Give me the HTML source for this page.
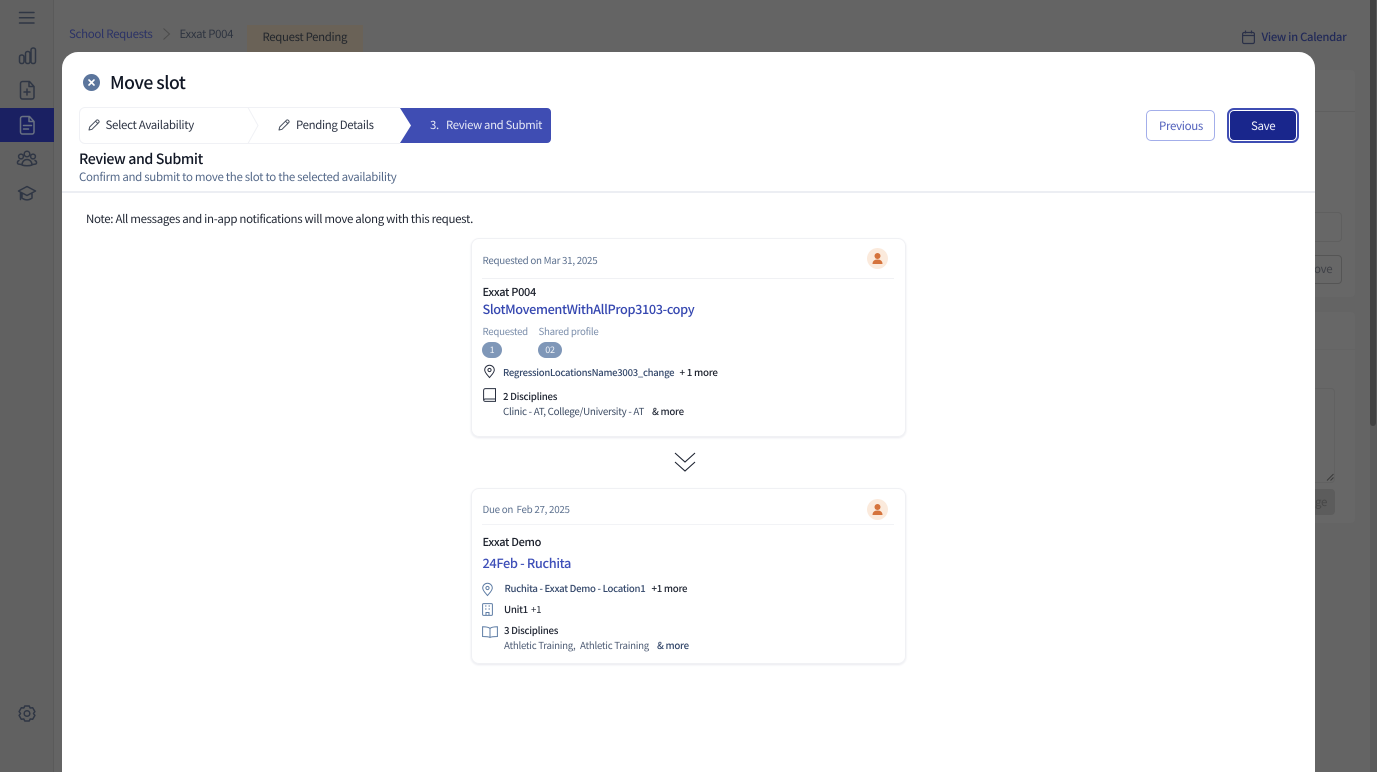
<!DOCTYPE html>
<html lang="en"><head><meta charset="utf-8"><title>Move slot</title>
<style>
html,body{margin:0;padding:0;width:1377px;height:772px;overflow:hidden}
#w{position:absolute;left:0;top:0;width:1377px;height:772px;overflow:hidden;background:#646464;font-family:"Noto Sans CJK JP","Liberation Sans",sans-serif;color:#1c2230;text-rendering:geometricPrecision}
.t{position:absolute;white-space:nowrap;line-height:20px;font-size:10.6px;letter-spacing:-.028em}
.a{position:absolute}
svg{position:absolute;overflow:visible;fill:none}
.side{stroke:#2f3644;stroke-width:1.5;stroke-linecap:round;stroke-linejoin:round}
</style></head><body><div id="w">

<!-- background page -->
<div class="a" style="left:0;top:0;width:53px;height:772px;background:#616161;border-right:1px solid #5a5a5a"></div>
<div class="a" style="left:0;top:108px;width:54px;height:34px;background:#1a2062"></div>
<svg style="left:0;top:0" width="54" height="772" class="side">
<path d="M19.500 12.500H34M19.500 17.700H34M19.500 23H34"/>
<rect x="19.500" y="55" width="4.500" height="8.500" rx="2"/><rect x="25.500" y="51.500" width="4.500" height="12" rx="2"/><rect x="31" y="48" width="4.500" height="15.500" rx="2"/>
<path d="M22.500 81.500h7l4.500 5v10.500a2 2 0 0 1-2 2H22.500a2 2 0 0 1-2-2V83.500a2 2 0 0 1 2-2zM29 81.500v5h5M24 92h6M27 89v6"/>
<path d="M22.500 116.500h7l4.500 5v10.500a2 2 0 0 1-2 2H22.500a2 2 0 0 1-2-2V118.500a2 2 0 0 1 2-2zM29 116.500v5h5M23.500 125.500h8M23.500 129h5" stroke="#687082"/>
<circle cx="27" cy="154" r="2.800"/><circle cx="21" cy="156.500" r="2.400"/><circle cx="33" cy="156.500" r="2.400"/><path d="M22 165c0-3 2-5.500 5-5.500s5 2.500 5 5.500c-2.500 1-7.500 1-10 0zM19 160.500c-2 .8-1.800 3-.8 3.500l3 .5M35 160.500c2 .8 1.800 3 .8 3.500l-3 .5"/>
<path d="M18.500 191l8.500-4.500 8.500 4.500-8.500 4.500zM22 193.500v4.500c3 2.500 7 2.500 10 0v-4.500M20.500 192v7.500"/>
<circle cx="27" cy="713.500" r="2.800"/><path d="M24.800 706l4.400 0 1 2 2.500-.2 2.200 3.800-1.400 1.900 1.400 1.900-2.200 3.800-2.500-.2-1 2h-4.400l-1-2-2.500.2-2.200-3.800 1.400-1.900-1.400-1.900 2.200-3.800 2.500.2z"/>
</svg>

<div class="t" style="left:69px;top:24px;font-size:11.5px;color:#2b3266">School Requests</div>
<svg style="left:162px;top:28px" width="9" height="12" stroke="#4b4b4b" stroke-width="1"><path d="M1.500 .5l6 5.500-6 5.500"/></svg>
<div class="t" style="left:179.500px;top:24px;font-size:11.4px;color:#2e3440">Exxat P004</div>
<div class="a" style="left:247px;top:25px;width:116px;height:27px;background:#6a6257"></div>
<div class="t" style="left:262.500px;top:27px;font-size:11.4px;color:#22262c">Request Pending</div>
<svg style="left:1242px;top:30px" width="13" height="14" stroke="#2a3048" stroke-width="1.200"><rect x=".6" y="2.500" width="11.800" height="11" rx="1.500"/><path d="M.6 5.500h11.800M3.500 .5v3M9.500 .5v3"/></svg>
<div class="t" style="left:1261.500px;top:27px;font-size:11.3px;font-weight:500;color:#222a58">View in Calendar</div>

<div class="a" style="left:1370px;top:0;width:7px;height:772px;background:#5c5c5c"></div>
<div class="a" style="left:1370px;top:0;width:6px;height:426px;background:#434343;border-radius:0 0 3px 3px"></div>

<div class="a" style="left:1315px;top:70px;width:40px;height:227px;background:#676767;border-radius:0 4px 4px 0"></div>
<div class="a" style="left:1315px;top:111px;width:40px;height:1px;background:#5f5f5f"></div>
<div class="a" style="left:1315px;top:212px;width:26px;height:28px;border:1px solid #5f5f5f;border-left:0;border-radius:0 4px 4px 0"></div>
<div class="a" style="left:1315px;top:255px;width:26px;height:27px;border:1px solid #555;border-left:0;border-radius:0 4px 4px 0"></div>
<div class="t" style="left:1314px;top:259px;font-size:11.5px;color:#3f4147">ove</div>
<div class="a" style="left:1315px;top:312px;width:40px;height:37px;background:#676767;border-radius:0 4px 0 0"></div>
<div class="a" style="left:1315px;top:350px;width:40px;height:173px;background:#676767;border-radius:0 0 4px 0"></div>
<div class="a" style="left:1315px;top:388px;width:19px;height:93px;border:1px solid #616161;border-left:0;border-radius:0 4px 4px 0"></div>
<svg style="left:1326px;top:473px" width="9" height="9" stroke="#3a3a3a" stroke-width="1"><path d="M1 7.500L7.500 1M4.500 7.500L7.500 4.500"/></svg>
<div class="a" style="left:1315px;top:489px;width:20px;height:26px;background:#5c5c5c;border-radius:0 4px 4px 0"></div>
<div class="t" style="left:1315px;top:492px;font-size:11.5px;color:#474747">ge</div>

<!-- modal -->
<div class="a" style="left:62px;top:52px;width:1253px;height:740px;background:#fff;border-radius:16px"></div>

<svg style="left:83px;top:74px" width="17" height="17"><circle cx="8.500" cy="8.500" r="8.500" fill="#5b759c"/><path d="M6 6l5 5M11 6l-5 5" stroke="#fff" stroke-width="1.600" stroke-linecap="round"/></svg>
<div class="t" style="left:110px;top:71px;font-size:17.6px;line-height:24px;font-weight:500;color:#111725">Move slot</div>

<!-- stepper -->
<svg style="left:79px;top:107px" width="473" height="37">
<path d="M6 .500H169M169 .500l10 18-10 18H6a5.500 5.500 0 0 1-5.500-5.500V6A5.500 5.500 0 0 1 6 .500zM169 36.500H321" stroke="#f0f1f5" fill="#fff"/>
<path d="M169 .500H321" stroke="#f0f1f5"/>
<path d="M321 1h147a4 4 0 0 1 4 4v27a4 4 0 0 1-4 4H321l11-17.500z" fill="#3f4db3"/>
</svg>
<svg style="left:88px;top:119px" width="12" height="12" stroke="#48505f" stroke-width="1" stroke-linejoin="round"><path d="M1 11l.7-3L8.500 1.200a1.200 1.200 0 0 1 1.700 0l.6.600a1.200 1.200 0 0 1 0 1.700L4 10.300zM7.500 2.200l2.300 2.300"/></svg>
<div class="t" style="left:105.500px;top:115px;font-size:11.5px;color:#2d3444">Select Availability</div>
<svg style="left:278px;top:119px" width="12" height="12" stroke="#48505f" stroke-width="1" stroke-linejoin="round"><path d="M1 11l.7-3L8.500 1.200a1.200 1.200 0 0 1 1.700 0l.6.600a1.200 1.200 0 0 1 0 1.700L4 10.300zM7.500 2.200l2.300 2.300"/></svg>
<div class="t" style="left:296px;top:115px;font-size:11.4px;color:#2d3444">Pending Details</div>
<div class="t" style="left:430px;top:115px;font-size:11.4px;color:#e6e8f6">3.</div>
<div class="t" style="left:446px;top:115px;font-size:11.3px;color:#e6e8f6">Review and Submit</div>

<!-- buttons -->
<div class="a" style="left:1146px;top:110px;width:67px;height:29px;border:1px solid #a3aeea;border-radius:5px"></div>
<div class="t" style="left:1159px;top:115.500px;font-size:11.5px;color:#5160bc">Previous</div>
<div class="a" style="left:1227px;top:108px;width:72px;height:35px;box-sizing:border-box;border:2px solid #3f4db3;border-radius:7px;background:#fff"></div>
<div class="a" style="left:1230px;top:111px;width:66px;height:29px;background:#19268c;border-radius:4px"></div>
<div class="t" style="left:1251px;top:115.500px;font-size:11.5px;color:#eef0fa">Save</div>

<div class="t" style="left:79px;top:149px;font-size:14.2px;font-weight:500;color:#111725">Review and Submit</div>
<div class="t" style="left:79px;top:166.500px;font-size:11.5px;color:#566a8a">Confirm and submit to move the slot to the selected availability</div>
<div class="a" style="left:62px;top:191px;width:1253px;height:2px;background:#eceef3"></div>
<div class="t" style="left:86px;top:209px;font-size:11.5px;color:#1f2532">Note: All messages and in-app notifications will move along with this request.</div>

<!-- card 1 -->
<div class="a" style="left:471px;top:238px;width:435px;height:199px;box-sizing:border-box;border:1px solid #f0f1f4;border-radius:8px;box-shadow:0 1px 2px #e8e9ee"></div>
<div class="t" style="left:482.500px;top:250px;font-size:9.8px;color:#5e7290">Requested on Mar 31, 2025</div>
<svg style="left:867px;top:248px" width="21" height="21"><circle cx="10.500" cy="10.500" r="10.500" fill="#fbeadc"/><circle cx="10.500" cy="8" r="3" fill="#d5733c"/><path d="M5.500 16c0-3 2-4.500 5-4.500s5 1.500 5 4.500z" fill="#d5733c"/></svg>
<div class="a" style="left:482px;top:278px;width:412px;height:1px;background:#f0f1f4"></div>
<div class="t" style="left:482.500px;top:281.500px;font-size:11px;font-weight:500;color:#1a1f2a">Exxat P004</div>
<div class="t" style="left:482.500px;top:299px;font-size:12.7px;font-weight:500;color:#3547b0">SlotMovementWithAllProp3103-copy</div>
<div class="t" style="left:482.500px;top:321px;font-size:9.7px;color:#7a8daa">Requested</div>
<div class="t" style="left:538.500px;top:321px;font-size:9.7px;color:#7a8daa">Shared profile</div>
<div class="a" style="left:482px;top:342px;width:20px;height:16px;background:#7f97b8;border-radius:8px"></div>
<div class="t" style="left:482px;top:340px;width:20px;text-align:center;font-size:9px;color:#eef2f7">1</div>
<div class="a" style="left:538px;top:342px;width:24px;height:16px;background:#7f97b8;border-radius:8px"></div>
<div class="t" style="left:538px;top:340px;width:24px;text-align:center;font-size:9px;color:#eef2f7">02</div>
<svg style="left:484px;top:365px" width="11" height="13" stroke="#2a3040" stroke-width="1"><path d="M5.500 12.500C3 9.500 .7 7.500 .7 5A4.800 4.800 0 0 1 10.300 5c0 2.500-2.300 4.500-4.800 7.500z"/><circle cx="5.500" cy="5" r="1.600"/></svg>
<div class="t" style="left:503px;top:362px;font-size:9.5px;font-weight:500;color:#34486b">RegressionLocationsName3003_change</div>
<div class="t" style="left:679.500px;top:362px;font-size:9.8px;font-weight:500;color:#1a1f2a">+ 1 more</div>
<svg style="left:483px;top:388px" width="13" height="14" stroke="#2a3040" stroke-width="1"><path d="M2.500 .6H12.500V11H2.500A1.700 1.700 0 0 0 .6 12.200V2.500A1.900 1.900 0 0 1 2.500 .6zM.6 12A1.600 1.600 0 0 0 2.500 13.400H12.500V11"/></svg>
<div class="t" style="left:503px;top:385.500px;font-size:9.7px;font-weight:500;color:#1f2532">2 Disciplines</div>
<div class="t" style="left:503px;top:400.500px;font-size:9.8px;color:#3e4d65">Clinic - AT, College/University - AT</div>
<div class="t" style="left:652px;top:400.500px;font-size:9.7px;font-weight:500;color:#262c3a">&amp; more</div>

<!-- chevrons -->
<svg style="left:674px;top:452px" width="22" height="20" stroke="#1c2230" stroke-width="1.100"><path d="M1 1l10 9 10-9M1 10l10 9 10-9"/></svg>

<!-- card 2 -->
<div class="a" style="left:471px;top:488px;width:435px;height:176px;box-sizing:border-box;border:1px solid #f0f1f4;border-radius:8px;box-shadow:0 1px 2px #e8e9ee"></div>
<div class="t" style="left:482.500px;top:499px;font-size:9.8px;color:#5e7290">Due on</div>
<div class="t" style="left:516.500px;top:499px;font-size:9.8px;color:#5e7290">Feb 27, 2025</div>
<svg style="left:867px;top:499px" width="21" height="21"><circle cx="10.500" cy="10.500" r="10.500" fill="#fbeadc"/><circle cx="10.500" cy="8" r="3" fill="#d5733c"/><path d="M5.500 16c0-3 2-4.500 5-4.500s5 1.500 5 4.500z" fill="#d5733c"/></svg>
<div class="a" style="left:482px;top:524px;width:412px;height:1px;background:#f2f3f6"></div>
<div class="t" style="left:482.500px;top:531.500px;font-size:11px;font-weight:500;color:#1a1f2a">Exxat Demo</div>
<div class="t" style="left:482.500px;top:552.500px;font-size:12.8px;font-weight:500;color:#3e4fb8">24Feb - Ruchita</div>
<svg style="left:482px;top:583px" width="11" height="13" stroke="#5f7da5" stroke-width="1"><path d="M5.500 12.500C3 9.500 .7 7.500 .7 5A4.800 4.800 0 0 1 10.300 5c0 2.500-2.300 4.500-4.800 7.500z"/><circle cx="5.500" cy="5" r="1.600"/></svg>
<div class="t" style="left:504.500px;top:578px;font-size:9.6px;font-weight:500;color:#34486b">Ruchita - Exxat Demo - Location1</div>
<div class="t" style="left:651.500px;top:578px;font-size:9.7px;font-weight:500;color:#1f2532">+1 more</div>
<svg style="left:482px;top:603px" width="11" height="13" stroke="#5f7da5" stroke-width="1"><rect x=".6" y=".6" width="9.800" height="11.800" rx="1"/><path d="M3 3h1.500M6.500 3H8M3 6h1.500M6.500 6H8M4 12.400V9.500h3v2.900"/></svg>
<div class="t" style="left:504px;top:599px;font-size:9.7px;font-weight:500;color:#1f2532">Unit1</div>
<div class="t" style="left:531px;top:599px;font-size:9.7px;color:#1f2532">+1</div>
<svg style="left:482px;top:626px" width="16" height="12" stroke="#5f7da5" stroke-width="1"><path d="M8 2.500C6.500 1 3.500 .8 .6 .8V10.500C3.500 10.500 6.500 10.500 8 11.500 9.500 10.500 12.500 10.500 15.400 10.500V.8C12.500 .8 9.500 1 8 2.500zM8 2.500V11.500"/></svg>
<div class="t" style="left:504px;top:619.500px;font-size:9.7px;font-weight:500;color:#1f2532">3 Disciplines</div>
<div class="t" style="left:504px;top:635px;font-size:9.7px;color:#4f5d75">Athletic Training,</div>
<div class="t" style="left:580px;top:635px;font-size:9.7px;color:#4f5d75">Athletic Training</div>
<div class="t" style="left:657px;top:635px;font-size:9.7px;font-weight:500;color:#34486b">&amp; more</div>

</div></body></html>
